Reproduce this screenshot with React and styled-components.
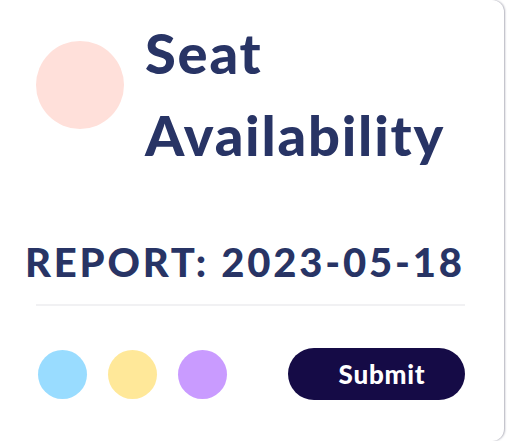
import React from "react";
import styled, { createGlobalStyle } from "styled-components";

const GlobalStyle = createGlobalStyle`
  html, body {
    margin: 0;
    padding: 0;
    background: #ffffff;
  }
  body {
    font-family: "Lato", "Open Sans", sans-serif;
  }
`;

const Card = styled.div`
  width: 504px;
  height: 441px;
  box-sizing: border-box;
  background: #ffffff;
  border-radius: 0 12px 12px 0;
  box-shadow: 1px 0 2px rgba(30, 30, 60, 0.35);
  padding: 12px 39px 0 25px;
  overflow: hidden;
`;

const Header = styled.div`
  display: flex;
  align-items: flex-start;
  gap: 21px;
  padding-left: 11px;
`;

const Avatar = styled.div`
  flex: none;
  width: 88px;
  height: 88px;
  margin-top: 29px;
  border-radius: 50%;
  background: #ffe0da;
`;

const Title = styled.h1`
  margin: 0;
  font-size: 56px;
  line-height: 82px;
  font-weight: 900;
  color: #283465;
  letter-spacing: 1.8px;
`;

const Report = styled.h2`
  margin: 62px 0 0;
  font-size: 40px;
  line-height: 48px;
  font-weight: 900;
  color: #283465;
  letter-spacing: 2.8px;
  white-space: nowrap;
`;

const Divider = styled.hr`
  margin: 18px 0 0 11px;
  border: none;
  height: 2px;
  background: #f1f1f3;
`;

const Footer = styled.div`
  display: flex;
  align-items: center;
  justify-content: space-between;
  margin-top: 42px;
  padding-left: 13px;
`;

const Dots = styled.div`
  display: flex;
  gap: 21px;
`;

const Dot = styled.span`
  width: 49px;
  height: 49px;
  border-radius: 50%;
  background: ${({ $color }) => $color};
`;

const Button = styled.button`
  width: 177px;
  height: 52px;
  border: none;
  border-radius: 26px;
  background: #150b46;
  color: #ffffff;
  font-family: inherit;
  font-size: 26px;
  font-weight: 900;
  letter-spacing: 0.8px;
  padding: 0 0 0 11px;
  cursor: pointer;
`;

export default function App() {
  return (
    <>
      <GlobalStyle />
      <Card>
        <Header>
          <Avatar />
          <Title>
            Seat
            <br />
            Availability
          </Title>
        </Header>
        <Report>REPORT: 2023-05-18</Report>
        <Divider />
        <Footer>
          <Dots>
            <Dot $color="#99dcff" />
            <Dot $color="#ffe899" />
            <Dot $color="#c99bff" />
          </Dots>
          <Button>Submit</Button>
        </Footer>
      </Card>
    </>
  );
}
